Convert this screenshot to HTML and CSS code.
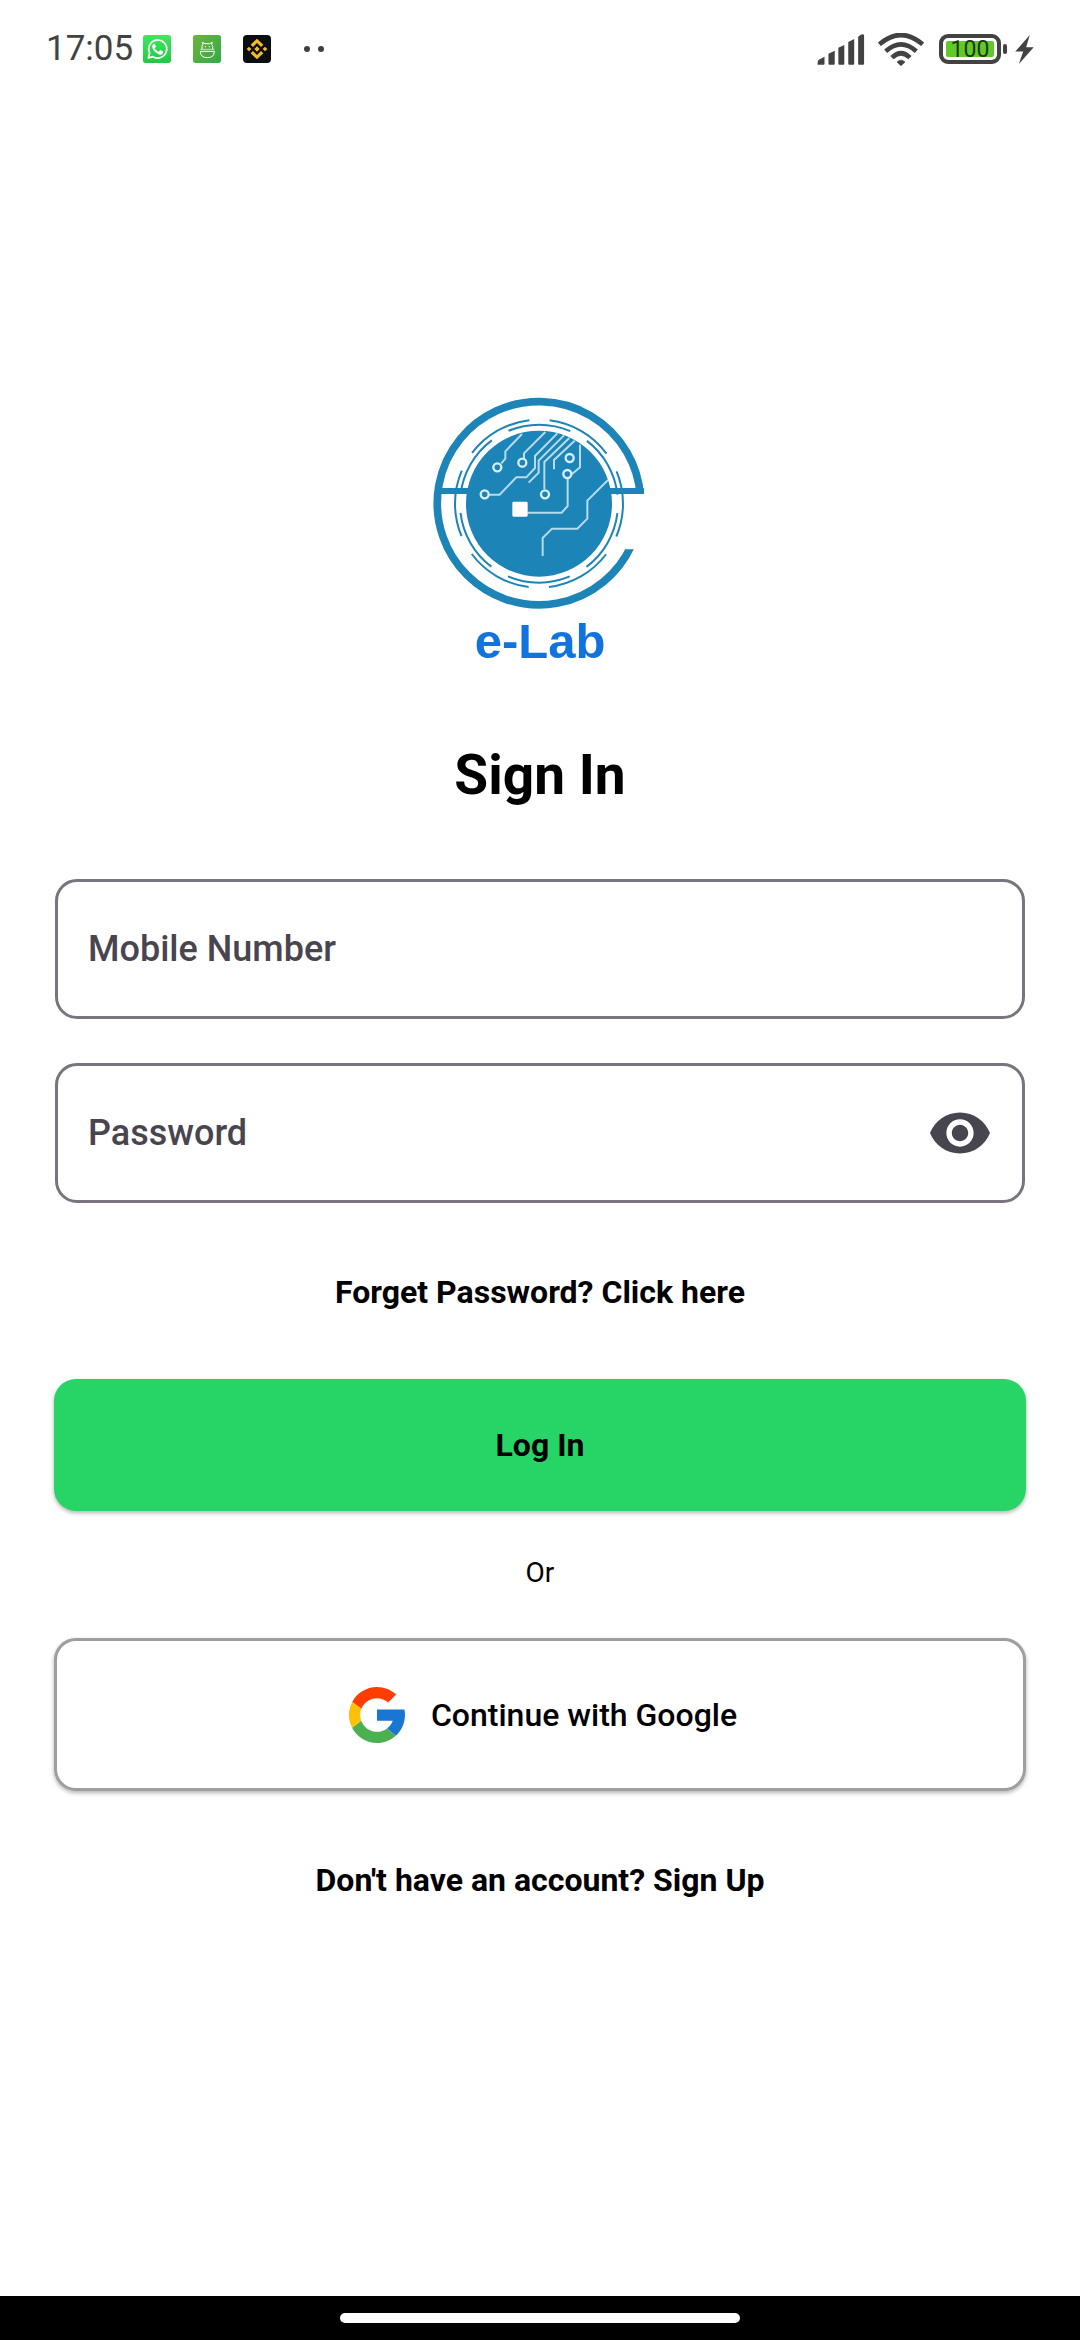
FILE: index.html
```html
<!DOCTYPE html>
<html lang="en">
<head>
<meta charset="utf-8">
<meta name="viewport" content="width=device-width, initial-scale=1">
<title>e-Lab Sign In</title>
<link rel="stylesheet" href="styles.css">
</head>
<body>
<header class="status">
  <div class="status-left">
    <span class="clock">17:05</span>
    <svg class="app" viewBox="0 0 84 84" aria-hidden="true">
      <defs><linearGradient id="wa" x1="0" y1="0" x2="0" y2="1"><stop offset="0" stop-color="#3fe75e"/><stop offset="1" stop-color="#22c943"/></linearGradient></defs>
      <rect width="84" height="84" rx="8" fill="url(#wa)"/>
      <path d="M16 69l4-15a27 27 0 1 1 10 11z" fill="none" stroke="#fff" stroke-width="5" stroke-linejoin="round"/>
      <path d="M32 27c-8 6-4 16 5 24s18 11 23 4l1-5-9-5-5 5c-6-2-10-6-12-11l4-4-4-9z" fill="#fff"/>
    </svg>
    <svg class="app" viewBox="0 0 84 84" aria-hidden="true">
      <defs><linearGradient id="an" x1="0" y1="0" x2="1" y2="1"><stop offset="0" stop-color="#6cb33d"/><stop offset="1" stop-color="#34aa46"/></linearGradient></defs>
      <rect width="84" height="84" rx="8" fill="url(#an)"/>
      <path d="M27 43V34q0-4 3-6l-2-6 8 4h14l8-4-2 6q3 2 3 6v9M22 49h42q0 19-21 19T22 49z" fill="none" stroke="#fff" stroke-width="3" stroke-linejoin="round"/>
      <path d="M22 43h42" stroke="#fff" stroke-width="2"/>
      <circle cx="37" cy="35" r="2" fill="#fff"/><circle cx="49" cy="35" r="2" fill="#fff"/>
    </svg>
    <svg class="app" viewBox="0 0 84 84" aria-hidden="true">
      <rect width="84" height="84" rx="12" fill="#0b0e11"/>
      <path fill="#f3ba2f" d="M42 11l19 18-7 7-12-12-12 12-7-7zM42 73L23 55l7-7 12 12 12-12 7 7zM42 34l8 8-8 8-8-8zM18 35l7 7-7 7-7-7zM66 35l7 7-7 7-7-7z"/>
    </svg>
    <svg class="more" viewBox="0 0 20 6" aria-hidden="true"><circle cx="3" cy="3" r="3" fill="#404040"/><circle cx="17" cy="3" r="3" fill="#404040"/></svg>
  </div>
  <div class="status-right">
    <svg class="signal" viewBox="0 0 144 94" fill="#424242" aria-hidden="true">
      <path d="M1 93q-1-12 5-16l16-8v21q0 3-3 3zM34 60l19-9v39q0 3-3 3H37q-3 0-3-3zM64 42l18-9v57q0 3-3 3H67q-3 0-3-3zM94 24l18-9v75q0 3-3 3H97q-3 0-3-3zM124 8q9-7 14-7 4 0 4 4v85q0 3-3 3h-12q-3 0-3-3z"/>
    </svg>
    <svg class="wifi" viewBox="0 0 138 99" fill="none" stroke="#424242" stroke-width="14" aria-hidden="true">
      <path d="M4 34Q69-22 134 34M23 55Q69 13 115 55M42 74Q69 48 96 74"/>
      <path d="M57 87q12-11 24 0L69 98z" fill="#424242" stroke-width="2" stroke-linejoin="round"/>
    </svg>
    <span class="battery">
      <span class="cell">100</span>
      <span class="nub"></span>
    </span>
    <svg class="bolt" viewBox="0 0 56 88" fill="#424242" aria-hidden="true"><path d="M44 0L0 50h24L11 88 56 37H33z"/></svg>
  </div>
</header>

<main class="page">
  <div class="brand">
    <svg class="emblem" viewBox="0 40 720 660" role="img" aria-label="e-Lab emblem">
      <g fill="none" stroke="#1c84b7">
        <path d="M661 345A305 305 0 1 0 634 495" stroke-width="23"/>
        <path d="M50 331h95M568 331h104" stroke-width="18"/>
        <circle cx="357" cy="369" r="237" stroke-width="6" pathLength="360" stroke-dasharray="46 14" stroke-dashoffset="-7"/>
        <circle cx="357" cy="369" r="252" stroke-width="6" pathLength="360" stroke-dasharray="46 14" stroke-dashoffset="23"/>
      </g>
      <path d="M616 340h80v166h-80z" fill="#fff"/>
      <circle cx="357" cy="369" r="219" fill="#1c84b7"/>
      <g fill="none" stroke="#b5dbec" stroke-width="6">
        <path d="M306 160l-50 52v22l-12 14M376 154l-64 64v16M412 158l-67 68v36l-26 28h-30l-50 52h-32M432 164l-76 76v36l-30 30M448 172l-75 72v82M464 180l-62 58v28M480 192v68l-24 20M443 292v84l-18 20H322M564 298l-62 62v54l-30 30h-76l-28 28v54"/>
        <g stroke="#d8eef7" stroke-width="7"><circle cx="232" cy="260" r="12"/><circle cx="307" cy="246" r="12"/><circle cx="449" cy="232" r="12"/><circle cx="442" cy="280" r="12"/><circle cx="194" cy="341" r="12"/><circle cx="375" cy="341" r="12"/></g>
      </g>
      <rect x="277" y="363" width="46" height="45" rx="4" fill="#fff"/>
    </svg>
    <span class="brand-name">e-Lab</span>
  </div>

  <h1 class="title">Sign In</h1>

  <form class="form">
    <div class="field">
      <label class="field-label" for="mobile">Mobile Number</label>
      <input class="input" id="mobile" type="tel">
    </div>
    <div class="field">
      <label class="field-label" for="password">Password</label>
      <input class="input" id="password" type="password">
      <button class="reveal" type="button" aria-label="Show password">
        <svg viewBox="1 4.5 22 15" fill="#49454f"><path d="M12 4.5C7 4.5 2.73 7.61 1 12c1.73 4.39 6 7.5 11 7.5s9.27-3.11 11-7.5c-1.73-4.39-6-7.5-11-7.5zM12 17c-2.76 0-5-2.24-5-5s2.24-5 5-5 5 2.24 5 5-2.24 5-5 5zm0-8c-1.66 0-3 1.34-3 3s1.34 3 3 3 3-1.34 3-3-1.34-3-3-3z"/></svg>
      </button>
    </div>
    <a class="link" href="#forget">Forget Password? Click here</a>
    <button class="btn btn-login" type="submit">Log In</button>
    <p class="or">Or</p>
    <button class="btn btn-google" type="button">
      <svg class="g-logo" viewBox="4 4 40 40" aria-hidden="true">
        <path fill="#1976d2" d="M43.611 20.083H24v8h11.303a12.04 12.04 0 0 1-4.087 5.571l6.19 5.238C36.971 39.205 44 34 44 24c0-1.341-.138-2.65-.389-3.917z"/>
        <path fill="#ff3d00" d="M6.306 14.691l6.571 4.819C14.655 15.108 18.961 12 24 12c3.059 0 5.842 1.154 7.961 3.039l5.657-5.657C34.046 6.053 29.268 4 24 4 16.318 4 9.656 8.337 6.306 14.691z"/>
        <path fill="#4caf50" d="M24 44c5.166 0 9.86-1.977 13.409-5.192l-6.19-5.238A11.91 11.91 0 0 1 24 36c-5.202 0-9.619-3.317-11.283-7.946l-6.522 5.025C9.505 39.556 16.227 44 24 44z"/>
        <path fill="#ffc107" d="M12.717 28.054A12 12 0 0 1 12.877 19.51l-6.571-4.819A20 20 0 0 0 6.195 33.079z"/>
      </svg>
      Continue with Google
    </button>
    <a class="link" href="#signup">Don't have an account? Sign Up</a>
  </form>
</main>

<footer class="navbar"><span class="pill"></span></footer>
</body>
</html>
```

FILE: styles.css
```css
* { box-sizing: border-box; }

body {
  margin: 0;
  min-height: 100vh;
  display: flex;
  flex-direction: column;
  background: #fff;
  color: #000;
  font-family: Roboto, sans-serif;
}

svg { display: block; }

/* Status bar */
.status {
  display: flex;
  justify-content: space-between;
  align-items: center;
  height: 98px;
  padding: 0 46px;
}
.status-left, .status-right { display: flex; align-items: center; }
.status-left { gap: 22px; }
.clock {
  margin-right: -12px;
  color: #424242;
  font-size: 35px;
  line-height: 40px;
}
.app { width: 28px; height: 28px; }
.more { width: 20px; height: 6px; margin-left: 11px; }
.signal { width: 48px; height: 31px; margin-right: 13px; }
.wifi { width: 46px; height: 33px; margin-right: 15px; }
.battery { display: flex; align-items: center; gap: 2px; margin-right: 8px; }
.cell {
  width: 62px;
  height: 30px;
  border: 4px solid #424242;
  border-radius: 9px;
  background: #62c928;
  box-shadow: inset 0 0 0 3px #fff;
  color: #1f3a10;
  font-size: 23px;
  line-height: 24px;
  text-align: center;
}
.nub { width: 4px; height: 10px; border-radius: 2px; background: #424242; }
.bolt { width: 19px; height: 29px; }

/* Sign-in page */
.page {
  flex: 1;
  display: flex;
  flex-direction: column;
  padding: 296px 54px 0;
}
.brand { display: flex; flex-direction: column; align-items: center; }
.emblem { width: 240px; height: 220px; }
.brand-name {
  color: #1273de;
  font-family: "Liberation Sans", Arial, sans-serif;
  font-size: 49px;
  font-weight: 700;
  line-height: 54px;
}
.title {
  margin: 75px 0 72px;
  font-size: 55px;
  font-weight: 700;
  line-height: 64px;
  text-align: center;
}
.form { display: flex; flex-direction: column; }

/* The label rests on top of its input, in the same grid cell */
.field {
  display: grid;
  grid-template-columns: 1fr auto;
  align-items: center;
  height: 140px;
  margin: 0 1px 44px;
  padding: 0 32px 0 30px;
  border: 3px solid #79747e;
  border-radius: 22px;
}
.field-label, .input {
  grid-area: 1 / 1;
  font-size: 36px;
  font-weight: 500;
  line-height: 42px;
  color: #49454f;
}
.field-label { pointer-events: none; }
.input {
  width: 100%;
  min-width: 0;
  padding: 0;
  border: 0;
  outline: 0;
  background: none;
  font-family: inherit;
}
.field:focus-within .field-label { opacity: .4; }
.reveal { padding: 0; border: 0; background: none; }
.reveal svg { width: 60px; height: 42px; }
.link {
  align-self: center;
  color: #000;
  font-size: 32px;
  font-weight: 700;
  line-height: 36px;
  text-decoration: none;
}
.form > .link { margin: 27px 0 69px; }
.btn {
  display: flex;
  justify-content: center;
  align-items: center;
  padding: 0;
  border: 0;
  border-radius: 22px;
  box-shadow: 0 2px 4px rgba(0, 0, 0, .3);
  color: #000;
  font: 700 32px/36px Roboto, sans-serif;
}
.btn-login { height: 132px; background: #27d567; }
.or {
  margin: 45px 0 48px;
  font-size: 28px;
  line-height: 34px;
  text-align: center;
}
.btn-google {
  gap: 26px;
  height: 153px;
  padding-left: 6px;
  border: 3px solid #9e9e9e;
  background: #fff;
  font-weight: 500;
}
.form > .btn-google + .link { margin-top: 71px; }
.g-logo { width: 56px; height: 56px; }

/* Gesture bar */
.navbar {
  display: flex;
  justify-content: center;
  align-items: center;
  height: 44px;
  background: #000;
}
.pill { width: 37%; height: 10px; border-radius: 5px; background: #fff; }
```
